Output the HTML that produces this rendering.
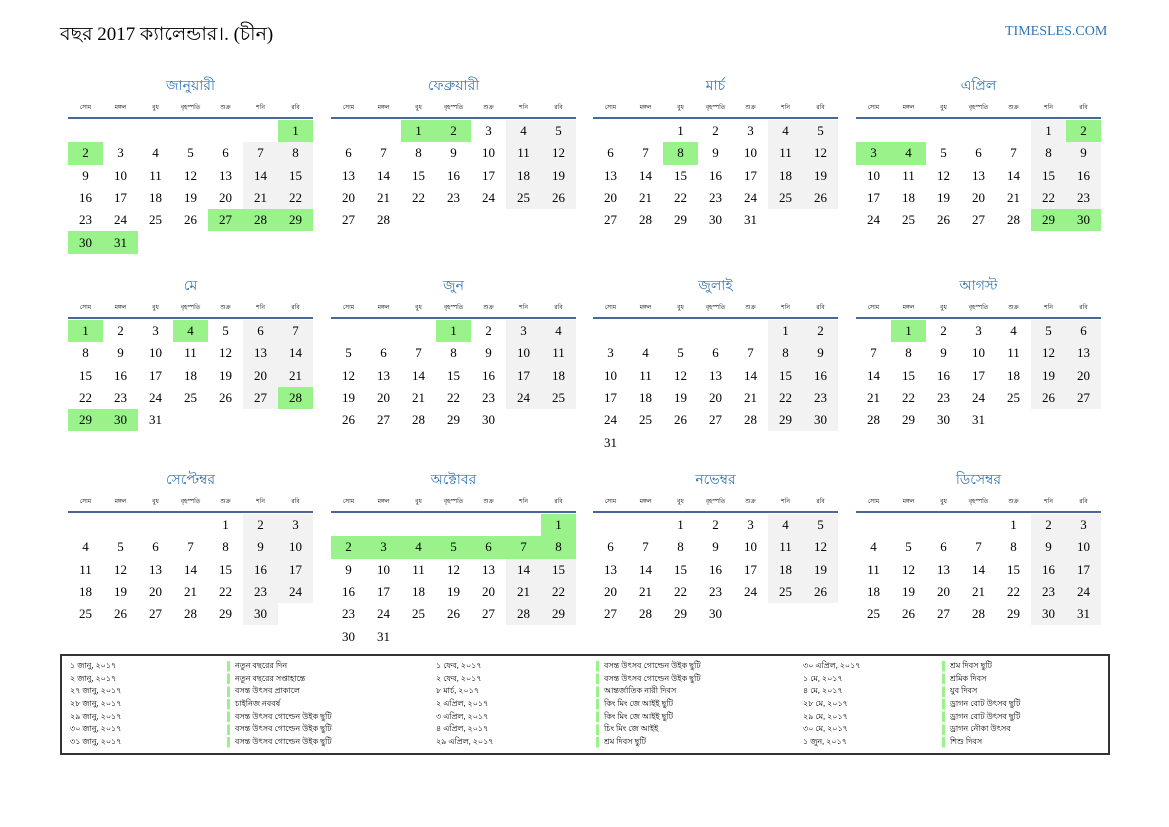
<!DOCTYPE html>
<html><head><meta charset="utf-8"><style>
body{margin:0;width:1169px;height:827px;background:#fff;position:relative;font-family:"Liberation Serif","Noto Serif CJK SC",serif;color:#000;overflow:hidden}
.t{position:absolute;left:60px;top:20px;font-size:19px}
.s{position:absolute;left:1005px;top:24px;font-size:14px;color:#2e75b6}
.m{position:absolute;width:245px}
.m h2{margin:0;position:absolute;top:7px;left:0;width:245px;text-align:center;font-weight:normal;font-size:14px;color:#2e75b6;line-height:20px}
.m .d{position:absolute;top:33px;left:0;width:245px;display:flex;border-bottom:2px solid #4a6897;height:14px}
.m .d span{width:35px;text-align:center;font-size:6px;line-height:10px}
.m table{position:absolute;top:50px;left:0;border-collapse:collapse;table-layout:fixed;width:245px}
.m td{width:35px;height:22.3px;padding:0;text-align:center;font-size:13px;line-height:20px}
td.w{background:#f2f2f2}
td.g{background:#99f28a}
.f{position:absolute;left:60px;top:654px;width:1046px;height:97px;border:2px solid #333}
.f div{position:absolute;font-size:8px;line-height:12.67px;white-space:pre}
.f .b{padding-left:8px;background:repeating-linear-gradient(to bottom,#99f28a 0 10.5px,transparent 10.5px 12.67px) 0 1px/3px 100% no-repeat}
</style></head><body>
<div class="t">বছর 2017 ক্যালেন্ডার।. (চীন)</div>
<div class="s">TIMESLES.COM</div>

<div class="m" style="left:68px;top:70px"><h2>জানুয়ারী</h2><div class="d"><span>সোম</span><span>মঙ্গল</span><span>বুধ</span><span>বৃহস্পতি</span><span>শুক্র</span><span>শনি</span><span>রবি</span></div><table>
<tr><td></td><td></td><td></td><td></td><td></td><td></td><td class=g>1</td></tr>
<tr><td class=g>2</td><td>3</td><td>4</td><td>5</td><td>6</td><td class=w>7</td><td class=w>8</td></tr>
<tr><td>9</td><td>10</td><td>11</td><td>12</td><td>13</td><td class=w>14</td><td class=w>15</td></tr>
<tr><td>16</td><td>17</td><td>18</td><td>19</td><td>20</td><td class=w>21</td><td class=w>22</td></tr>
<tr><td>23</td><td>24</td><td>25</td><td>26</td><td class=g>27</td><td class=g>28</td><td class=g>29</td></tr>
<tr><td class=g>30</td><td class=g>31</td><td></td><td></td><td></td><td></td><td></td></tr></table></div>

<div class="m" style="left:331px;top:70px"><h2>ফেব্রুয়ারী</h2><div class="d"><span>সোম</span><span>মঙ্গল</span><span>বুধ</span><span>বৃহস্পতি</span><span>শুক্র</span><span>শনি</span><span>রবি</span></div><table>
<tr><td></td><td></td><td class=g>1</td><td class=g>2</td><td>3</td><td class=w>4</td><td class=w>5</td></tr>
<tr><td>6</td><td>7</td><td>8</td><td>9</td><td>10</td><td class=w>11</td><td class=w>12</td></tr>
<tr><td>13</td><td>14</td><td>15</td><td>16</td><td>17</td><td class=w>18</td><td class=w>19</td></tr>
<tr><td>20</td><td>21</td><td>22</td><td>23</td><td>24</td><td class=w>25</td><td class=w>26</td></tr>
<tr><td>27</td><td>28</td><td></td><td></td><td></td><td></td><td></td></tr></table></div>

<div class="m" style="left:593px;top:70px"><h2>মার্চ</h2><div class="d"><span>সোম</span><span>মঙ্গল</span><span>বুধ</span><span>বৃহস্পতি</span><span>শুক্র</span><span>শনি</span><span>রবি</span></div><table>
<tr><td></td><td></td><td>1</td><td>2</td><td>3</td><td class=w>4</td><td class=w>5</td></tr>
<tr><td>6</td><td>7</td><td class=g>8</td><td>9</td><td>10</td><td class=w>11</td><td class=w>12</td></tr>
<tr><td>13</td><td>14</td><td>15</td><td>16</td><td>17</td><td class=w>18</td><td class=w>19</td></tr>
<tr><td>20</td><td>21</td><td>22</td><td>23</td><td>24</td><td class=w>25</td><td class=w>26</td></tr>
<tr><td>27</td><td>28</td><td>29</td><td>30</td><td>31</td><td></td><td></td></tr></table></div>

<div class="m" style="left:856px;top:70px"><h2>এপ্রিল</h2><div class="d"><span>সোম</span><span>মঙ্গল</span><span>বুধ</span><span>বৃহস্পতি</span><span>শুক্র</span><span>শনি</span><span>রবি</span></div><table>
<tr><td></td><td></td><td></td><td></td><td></td><td class=w>1</td><td class=g>2</td></tr>
<tr><td class=g>3</td><td class=g>4</td><td>5</td><td>6</td><td>7</td><td class=w>8</td><td class=w>9</td></tr>
<tr><td>10</td><td>11</td><td>12</td><td>13</td><td>14</td><td class=w>15</td><td class=w>16</td></tr>
<tr><td>17</td><td>18</td><td>19</td><td>20</td><td>21</td><td class=w>22</td><td class=w>23</td></tr>
<tr><td>24</td><td>25</td><td>26</td><td>27</td><td>28</td><td class=g>29</td><td class=g>30</td></tr></table></div>

<div class="m" style="left:68px;top:270px"><h2>মে</h2><div class="d"><span>সোম</span><span>মঙ্গল</span><span>বুধ</span><span>বৃহস্পতি</span><span>শুক্র</span><span>শনি</span><span>রবি</span></div><table>
<tr><td class=g>1</td><td>2</td><td>3</td><td class=g>4</td><td>5</td><td class=w>6</td><td class=w>7</td></tr>
<tr><td>8</td><td>9</td><td>10</td><td>11</td><td>12</td><td class=w>13</td><td class=w>14</td></tr>
<tr><td>15</td><td>16</td><td>17</td><td>18</td><td>19</td><td class=w>20</td><td class=w>21</td></tr>
<tr><td>22</td><td>23</td><td>24</td><td>25</td><td>26</td><td class=w>27</td><td class=g>28</td></tr>
<tr><td class=g>29</td><td class=g>30</td><td>31</td><td></td><td></td><td></td><td></td></tr></table></div>

<div class="m" style="left:331px;top:270px"><h2>জুন</h2><div class="d"><span>সোম</span><span>মঙ্গল</span><span>বুধ</span><span>বৃহস্পতি</span><span>শুক্র</span><span>শনি</span><span>রবি</span></div><table>
<tr><td></td><td></td><td></td><td class=g>1</td><td>2</td><td class=w>3</td><td class=w>4</td></tr>
<tr><td>5</td><td>6</td><td>7</td><td>8</td><td>9</td><td class=w>10</td><td class=w>11</td></tr>
<tr><td>12</td><td>13</td><td>14</td><td>15</td><td>16</td><td class=w>17</td><td class=w>18</td></tr>
<tr><td>19</td><td>20</td><td>21</td><td>22</td><td>23</td><td class=w>24</td><td class=w>25</td></tr>
<tr><td>26</td><td>27</td><td>28</td><td>29</td><td>30</td><td></td><td></td></tr></table></div>

<div class="m" style="left:593px;top:270px"><h2>জুলাই</h2><div class="d"><span>সোম</span><span>মঙ্গল</span><span>বুধ</span><span>বৃহস্পতি</span><span>শুক্র</span><span>শনি</span><span>রবি</span></div><table>
<tr><td></td><td></td><td></td><td></td><td></td><td class=w>1</td><td class=w>2</td></tr>
<tr><td>3</td><td>4</td><td>5</td><td>6</td><td>7</td><td class=w>8</td><td class=w>9</td></tr>
<tr><td>10</td><td>11</td><td>12</td><td>13</td><td>14</td><td class=w>15</td><td class=w>16</td></tr>
<tr><td>17</td><td>18</td><td>19</td><td>20</td><td>21</td><td class=w>22</td><td class=w>23</td></tr>
<tr><td>24</td><td>25</td><td>26</td><td>27</td><td>28</td><td class=w>29</td><td class=w>30</td></tr>
<tr><td>31</td><td></td><td></td><td></td><td></td><td></td><td></td></tr></table></div>

<div class="m" style="left:856px;top:270px"><h2>আগস্ট</h2><div class="d"><span>সোম</span><span>মঙ্গল</span><span>বুধ</span><span>বৃহস্পতি</span><span>শুক্র</span><span>শনি</span><span>রবি</span></div><table>
<tr><td></td><td class=g>1</td><td>2</td><td>3</td><td>4</td><td class=w>5</td><td class=w>6</td></tr>
<tr><td>7</td><td>8</td><td>9</td><td>10</td><td>11</td><td class=w>12</td><td class=w>13</td></tr>
<tr><td>14</td><td>15</td><td>16</td><td>17</td><td>18</td><td class=w>19</td><td class=w>20</td></tr>
<tr><td>21</td><td>22</td><td>23</td><td>24</td><td>25</td><td class=w>26</td><td class=w>27</td></tr>
<tr><td>28</td><td>29</td><td>30</td><td>31</td><td></td><td></td><td></td></tr></table></div>

<div class="m" style="left:68px;top:464px"><h2>সেপ্টেম্বর</h2><div class="d"><span>সোম</span><span>মঙ্গল</span><span>বুধ</span><span>বৃহস্পতি</span><span>শুক্র</span><span>শনি</span><span>রবি</span></div><table>
<tr><td></td><td></td><td></td><td></td><td>1</td><td class=w>2</td><td class=w>3</td></tr>
<tr><td>4</td><td>5</td><td>6</td><td>7</td><td>8</td><td class=w>9</td><td class=w>10</td></tr>
<tr><td>11</td><td>12</td><td>13</td><td>14</td><td>15</td><td class=w>16</td><td class=w>17</td></tr>
<tr><td>18</td><td>19</td><td>20</td><td>21</td><td>22</td><td class=w>23</td><td class=w>24</td></tr>
<tr><td>25</td><td>26</td><td>27</td><td>28</td><td>29</td><td class=w>30</td><td></td></tr></table></div>

<div class="m" style="left:331px;top:464px"><h2>অক্টোবর</h2><div class="d"><span>সোম</span><span>মঙ্গল</span><span>বুধ</span><span>বৃহস্পতি</span><span>শুক্র</span><span>শনি</span><span>রবি</span></div><table>
<tr><td></td><td></td><td></td><td></td><td></td><td></td><td class=g>1</td></tr>
<tr><td class=g>2</td><td class=g>3</td><td class=g>4</td><td class=g>5</td><td class=g>6</td><td class=g>7</td><td class=g>8</td></tr>
<tr><td>9</td><td>10</td><td>11</td><td>12</td><td>13</td><td class=w>14</td><td class=w>15</td></tr>
<tr><td>16</td><td>17</td><td>18</td><td>19</td><td>20</td><td class=w>21</td><td class=w>22</td></tr>
<tr><td>23</td><td>24</td><td>25</td><td>26</td><td>27</td><td class=w>28</td><td class=w>29</td></tr>
<tr><td>30</td><td>31</td><td></td><td></td><td></td><td></td><td></td></tr></table></div>

<div class="m" style="left:593px;top:464px"><h2>নভেম্বর</h2><div class="d"><span>সোম</span><span>মঙ্গল</span><span>বুধ</span><span>বৃহস্পতি</span><span>শুক্র</span><span>শনি</span><span>রবি</span></div><table>
<tr><td></td><td></td><td>1</td><td>2</td><td>3</td><td class=w>4</td><td class=w>5</td></tr>
<tr><td>6</td><td>7</td><td>8</td><td>9</td><td>10</td><td class=w>11</td><td class=w>12</td></tr>
<tr><td>13</td><td>14</td><td>15</td><td>16</td><td>17</td><td class=w>18</td><td class=w>19</td></tr>
<tr><td>20</td><td>21</td><td>22</td><td>23</td><td>24</td><td class=w>25</td><td class=w>26</td></tr>
<tr><td>27</td><td>28</td><td>29</td><td>30</td><td></td><td></td><td></td></tr></table></div>

<div class="m" style="left:856px;top:464px"><h2>ডিসেম্বর</h2><div class="d"><span>সোম</span><span>মঙ্গল</span><span>বুধ</span><span>বৃহস্পতি</span><span>শুক্র</span><span>শনি</span><span>রবি</span></div><table>
<tr><td></td><td></td><td></td><td></td><td>1</td><td class=w>2</td><td class=w>3</td></tr>
<tr><td>4</td><td>5</td><td>6</td><td>7</td><td>8</td><td class=w>9</td><td class=w>10</td></tr>
<tr><td>11</td><td>12</td><td>13</td><td>14</td><td>15</td><td class=w>16</td><td class=w>17</td></tr>
<tr><td>18</td><td>19</td><td>20</td><td>21</td><td>22</td><td class=w>23</td><td class=w>24</td></tr>
<tr><td>25</td><td>26</td><td>27</td><td>28</td><td>29</td><td class=w>30</td><td class=w>31</td></tr></table></div>

<div class="f">
<div style="left:8px;top:4px">১ জানু, ২০১৭
২ জানু, ২০১৭
২৭ জানু, ২০১৭
২৮ জানু, ২০১৭
২৯ জানু, ২০১৭
৩০ জানু, ২০১৭
৩১ জানু, ২০১৭</div>
<div class="b" style="left:165px;top:4px">নতুন বছরের দিন
নতুন বছরের সপ্তাহান্তে
বসন্ত উৎসব প্রাকালে
চাইনিজ নববর্ষ
বসন্ত উৎসব গোল্ডেন উইক ছুটি
বসন্ত উৎসব গোল্ডেন উইক ছুটি
বসন্ত উৎসব গোল্ডেন উইক ছুটি</div>
<div style="left:374px;top:4px">১ ফেব, ২০১৭
২ ফেব, ২০১৭
৮ মার্চ, ২০১৭
২ এপ্রিল, ২০১৭
৩ এপ্রিল, ২০১৭
৪ এপ্রিল, ২০১৭
২৯ এপ্রিল, ২০১৭</div>
<div class="b" style="left:534px;top:4px">বসন্ত উৎসব গোল্ডেন উইক ছুটি
বসন্ত উৎসব গোল্ডেন উইক ছুটি
আন্তর্জাতিক নারী দিবস
কিং মিং জে আইই ছুটি
কিং মিং জে আইই ছুটি
চিং মিং জে আইই
শ্রম দিবস ছুটি</div>
<div style="left:741px;top:4px">৩০ এপ্রিল, ২০১৭
১ মে, ২০১৭
৪ মে, ২০১৭
২৮ মে, ২০১৭
২৯ মে, ২০১৭
৩০ মে, ২০১৭
১ জুন, ২০১৭</div>
<div class="b" style="left:880px;top:4px">শ্রম দিবস ছুটি
শ্রমিক দিবস
যুব দিবস
ড্রাগন বোট উৎসব ছুটি
ড্রাগন বোট উৎসব ছুটি
ড্রাগন নৌকা উৎসব
শিশু দিবস</div>
</div>
</body></html>
